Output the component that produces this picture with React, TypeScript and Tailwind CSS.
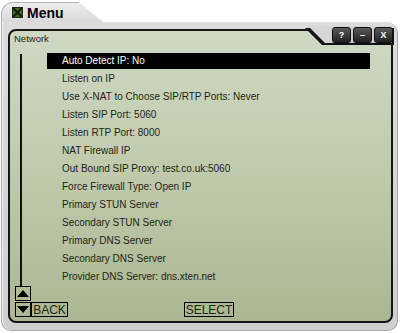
import React from "react";

const rows = [
  "Auto Detect IP: No",
  "Listen on IP",
  "Use X-NAT to Choose SIP/RTP Ports: Never",
  "Listen SIP Port: 5060",
  "Listen RTP Port: 8000",
  "NAT Firewall IP",
  "Out Bound SIP Proxy: test.co.uk:5060",
  "Force Firewall Type: Open IP",
  "Primary STUN Server",
  "Secondary STUN Server",
  "Primary DNS Server",
  "Secondary DNS Server",
  "Provider DNS Server: dns.xten.net",
];

function TitleIcon() {
  return (
    <svg width="11" height="11" viewBox="0 0 11 11">
      <rect x="0" y="0" width="11" height="11" fill="#3f6b22" />
      <path d="M1 1 L10 10 M10 1 L1 10" stroke="#15200c" strokeWidth="2.2" />
      <rect x="0.5" y="0.5" width="10" height="10" fill="none" stroke="#1d2a12" strokeWidth="1" />
    </svg>
  );
}

function WinButton({ label }: { label: string }) {
  return (
    <div className="w-[19px] h-[16px] rounded-[3px] bg-gradient-to-b from-[#5a5a5a] to-[#222222] border border-[#111] flex items-center justify-center text-white text-[9px] font-bold leading-none shadow-[0_1px_1px_rgba(0,0,0,0.4)]">
      {label}
    </div>
  );
}

export default function App() {
  return (
    <div
      className="relative w-[400px] h-[333px] bg-white overflow-hidden"
      style={{ fontFamily: '"Liberation Sans", Arial, sans-serif' }}
    >
      <div className="ml-[1px] mt-[2px] w-[397px] h-[329px] flex flex-col">
        {/* title row */}
        <div className="h-[20px] flex">
          <div className="w-[78px] rounded-tl-[12px] bg-gradient-to-b from-[#eeeeee] to-[#d8d8d8] border-t border-l border-[#b4b4b4] flex items-center pl-[10px] gap-[4px]">
            <TitleIcon />
            <span className="text-[14px] font-bold text-black leading-none">Menu</span>
          </div>
          <div className="w-[24px] bg-gradient-to-b from-[#eeeeee] to-[#d8d8d8] [clip-path:polygon(0_0,0_100%,100%_100%)]" />
          <div className="flex-1" />
        </div>
        {/* body */}
        <div className="flex-1 bg-gradient-to-b from-[#dcdcdc] to-[#cfcfcf] rounded-tr-[12px] rounded-b-[10px] border-l border-r border-b border-[#a9a9a9] shadow-[inset_1px_0_0_#f4f4f4] pl-[6px] pr-[4px] pt-[7px] pb-[7px] flex">
          <div className="flex-1 rounded-[8px] border-2 border-[#151515] bg-gradient-to-b from-[#cfd8c3] via-[#bfcaac] to-[#abb692] flex flex-col text-[#1e2418]">
            <div className="h-[16px] pl-[4px] flex items-center text-[9.5px] leading-none">Network</div>
            <div className="mt-[5px] h-[234px] flex">
              <div className="w-[37px] flex">
                <div className="ml-[10px] mt-[2px] w-[2px] bg-[#111]" />
              </div>
              <div className="flex-1 pr-[21px] flex flex-col">
                {rows.map((r, i) => (
                  <div key={r} className="h-[18px] flex items-center">
                    <div
                      className={
                        i === 0
                          ? "h-[16px] w-full bg-black text-white flex items-center pl-[15px] text-[10px] leading-none"
                          : "h-[16px] w-full flex items-center pl-[15px] text-[10px] leading-none"
                      }
                    >
                      {r}
                    </div>
                  </div>
                ))}
              </div>
            </div>
            <div className="flex items-end pl-[5px]">
              <div className="flex flex-col gap-[1px]">
                <div className="w-[16px] h-[15px] border border-black flex items-center justify-center">
                  <div className="w-0 h-0 border-l-[6px] border-r-[6px] border-b-[7px] border-l-transparent border-r-transparent border-b-black" />
                </div>
                <div className="w-[16px] h-[15px] border border-black flex items-center justify-center">
                  <div className="w-0 h-0 border-l-[6px] border-r-[6px] border-t-[7px] border-l-transparent border-r-transparent border-t-black" />
                </div>
              </div>
              <div className="w-[37px] h-[15px] border border-black flex items-center justify-center text-[12px] leading-none">
                BACK
              </div>
              <div className="ml-[116px] w-[50px] h-[15px] border border-black flex items-center justify-center text-[12px] leading-none">
                SELECT
              </div>
            </div>
          </div>
        </div>
      </div>
      {/* notch with window buttons */}
      <div className="absolute left-[305px] top-[28px] w-[89px] h-[17px] bg-[#151515] [clip-path:polygon(0_0,100%_0,100%_100%,17px_100%)]" />
      <div className="absolute left-[308px] top-[26px] w-[84px] h-[17px] bg-[#d6d6d6] [clip-path:polygon(0_0,100%_0,100%_100%,17px_100%)]" />
      <div className="absolute left-[332px] top-[27px] flex gap-[2px]">
        <WinButton label="?" />
        <WinButton label="–" />
        <WinButton label="X" />
      </div>
    </div>
  );
}
